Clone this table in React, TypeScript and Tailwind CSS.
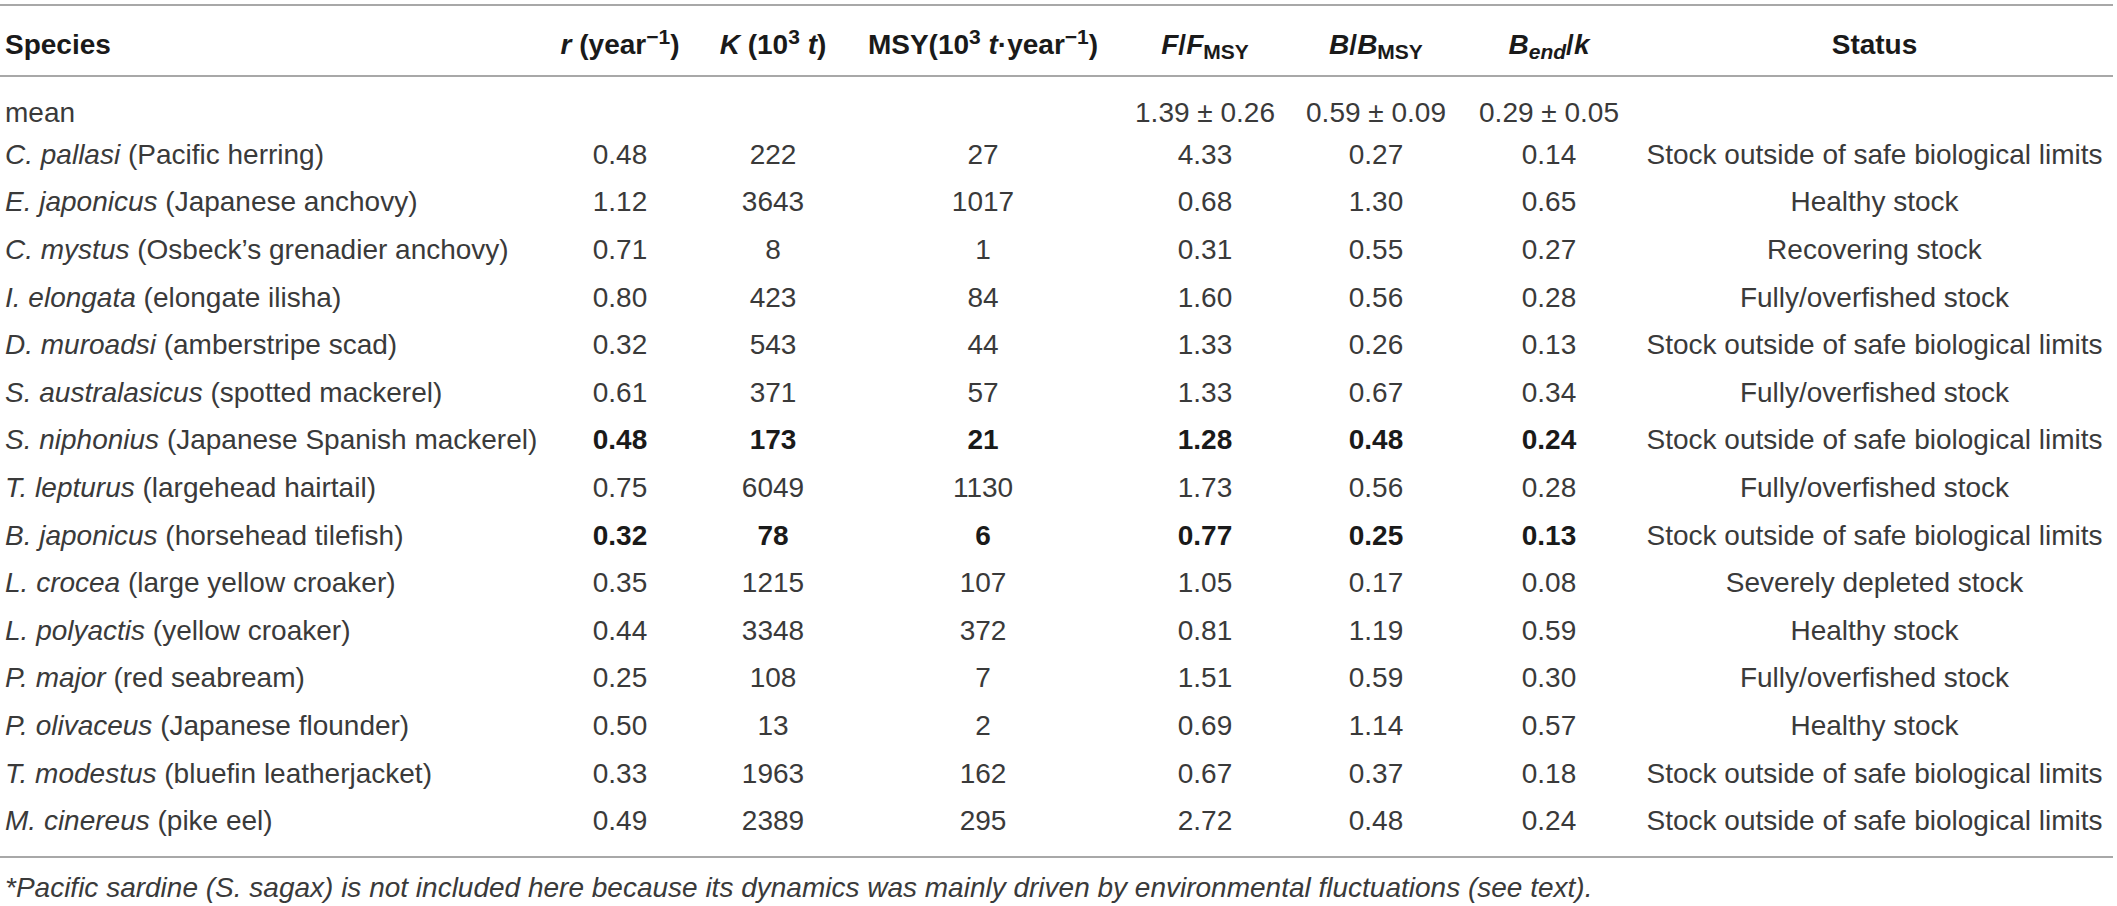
import React from 'react';

type Row = {
  genus: string;
  common: string;
  r: string;
  k: string;
  msy: string;
  f: string;
  b: string;
  bend: string;
  status: string;
  bold?: boolean;
};

const rows: Row[] = [
  { genus: 'C. pallasi', common: '(Pacific herring)', r: '0.48', k: '222', msy: '27', f: '4.33', b: '0.27', bend: '0.14', status: 'Stock outside of safe biological limits' },
  { genus: 'E. japonicus', common: '(Japanese anchovy)', r: '1.12', k: '3643', msy: '1017', f: '0.68', b: '1.30', bend: '0.65', status: 'Healthy stock' },
  { genus: 'C. mystus', common: '(Osbeck\u2019s grenadier anchovy)', r: '0.71', k: '8', msy: '1', f: '0.31', b: '0.55', bend: '0.27', status: 'Recovering stock' },
  { genus: 'I. elongata', common: '(elongate ilisha)', r: '0.80', k: '423', msy: '84', f: '1.60', b: '0.56', bend: '0.28', status: 'Fully/overfished stock' },
  { genus: 'D. muroadsi', common: '(amberstripe scad)', r: '0.32', k: '543', msy: '44', f: '1.33', b: '0.26', bend: '0.13', status: 'Stock outside of safe biological limits' },
  { genus: 'S. australasicus', common: '(spotted mackerel)', r: '0.61', k: '371', msy: '57', f: '1.33', b: '0.67', bend: '0.34', status: 'Fully/overfished stock' },
  { genus: 'S. niphonius', common: '(Japanese Spanish mackerel)', r: '0.48', k: '173', msy: '21', f: '1.28', b: '0.48', bend: '0.24', status: 'Stock outside of safe biological limits', bold: true },
  { genus: 'T. lepturus', common: '(largehead hairtail)', r: '0.75', k: '6049', msy: '1130', f: '1.73', b: '0.56', bend: '0.28', status: 'Fully/overfished stock' },
  { genus: 'B. japonicus', common: '(horsehead tilefish)', r: '0.32', k: '78', msy: '6', f: '0.77', b: '0.25', bend: '0.13', status: 'Stock outside of safe biological limits', bold: true },
  { genus: 'L. crocea', common: '(large yellow croaker)', r: '0.35', k: '1215', msy: '107', f: '1.05', b: '0.17', bend: '0.08', status: 'Severely depleted stock' },
  { genus: 'L. polyactis', common: '(yellow croaker)', r: '0.44', k: '3348', msy: '372', f: '0.81', b: '1.19', bend: '0.59', status: 'Healthy stock' },
  { genus: 'P. major', common: '(red seabream)', r: '0.25', k: '108', msy: '7', f: '1.51', b: '0.59', bend: '0.30', status: 'Fully/overfished stock' },
  { genus: 'P. olivaceus', common: '(Japanese flounder)', r: '0.50', k: '13', msy: '2', f: '0.69', b: '1.14', bend: '0.57', status: 'Healthy stock' },
  { genus: 'T. modestus', common: '(bluefin leatherjacket)', r: '0.33', k: '1963', msy: '162', f: '0.67', b: '0.37', bend: '0.18', status: 'Stock outside of safe biological limits' },
  { genus: 'M. cinereus', common: '(pike eel)', r: '0.49', k: '2389', msy: '295', f: '2.72', b: '0.48', bend: '0.24', status: 'Stock outside of safe biological limits' },
];

// column widths follow the printed table
const grid = 'grid grid-cols-[540px_160px_146px_274px_170px_172px_174px_477px] items-center';

export default function App() {
  return (
    <div className="w-[2117px] h-[906px] bg-white text-[#231f20] text-[28px] leading-[32px] font-['Liberation_Sans',Arial,sans-serif] pt-[4px]">
      <div className="w-[2113px]">
        {/* header */}
        <div className="border-t-2 border-b-2 border-[#a8a8a8]">
          <div className={`${grid} h-[69px] pt-[9px] font-bold text-[#1a1a1a]`}>
            <div className="pl-[5px]">Species</div>
            <div className="text-center">
              <i>r</i> (year<sup>&minus;1</sup>)
            </div>
            <div className="text-center">
              <i>K</i> (10<sup>3</sup> <i>t</i>)
            </div>
            <div className="text-center">
              MSY(10<sup>3</sup> <i>t</i>&middot;year<sup>&minus;1</sup>)
            </div>
            <div className="text-center">
              <i>F</i>/<i>F</i>
              <sub>MSY</sub>
            </div>
            <div className="text-center">
              <i>B</i>/<i>B</i>
              <sub>MSY</sub>
            </div>
            <div className="text-center">
              <i>B</i>
              <sub>
                <i>end</i>
              </sub>
              /<i>k</i>
            </div>
            <div className="text-center">Status</div>
          </div>
        </div>

        {/* body */}
        <div className="border-b-2 border-[#a8a8a8] pt-[18px] pb-[11px] text-[#3a3a3a]">
          <div className={`${grid} h-[36px]`}>
            <div className="pl-[5px]">mean</div>
            <div />
            <div />
            <div />
            <div className="text-center">1.39 &plusmn; 0.26</div>
            <div className="text-center">0.59 &plusmn; 0.09</div>
            <div className="text-center">0.29 &plusmn; 0.05</div>
            <div />
          </div>
          {rows.map((row) => {
            const num = row.bold ? 'text-center font-bold text-[#1a1a1a]' : 'text-center';
            return (
              <div key={row.genus} className={`${grid} h-[47.6px]`}>
                <div className="pl-[5px] whitespace-nowrap">
                  <i>{row.genus}</i> {row.common}
                </div>
                <div className={num}>{row.r}</div>
                <div className={num}>{row.k}</div>
                <div className={num}>{row.msy}</div>
                <div className={num}>{row.f}</div>
                <div className={num}>{row.b}</div>
                <div className={num}>{row.bend}</div>
                <div className="text-center whitespace-nowrap">{row.status}</div>
              </div>
            );
          })}
        </div>

        {/* footnote */}
        <p className="pl-[5px] pt-[14px] italic text-[#3a3a3a] whitespace-nowrap">
          *Pacific sardine (S. sagax) is not included here because its dynamics was mainly driven by
          environmental fluctuations (see text).
        </p>
      </div>
    </div>
  );
}
